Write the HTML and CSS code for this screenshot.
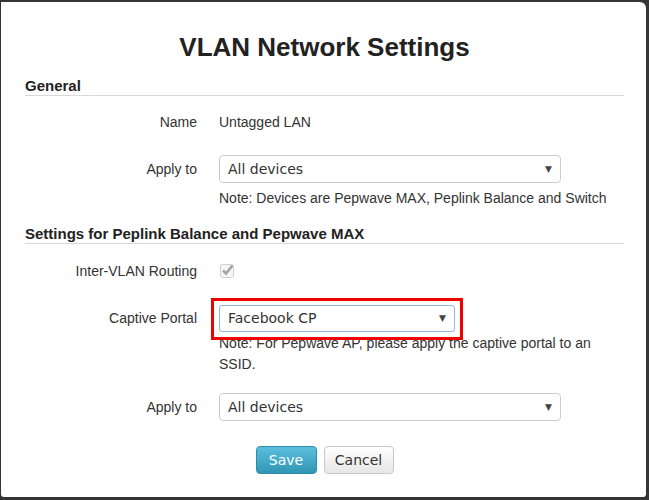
FILE: index.html
```html
<!DOCTYPE html>
<html lang="en">
  <head>
    <meta charset="UTF-8" />
    <meta name="viewport" content="width=device-width, initial-scale=1.0" />
    <title>VLAN Network Settings</title>

    <link rel="stylesheet" href="styles.css">
  </head>
  <body>
    <div class="modal">
      <h1 class="title">VLAN Network Settings</h1>

      <!-- General -->
      <div class="section-head">General</div>

      <div class="row row-name">
        <div class="label">Name</div>
        <div class="value">Untagged LAN</div>
      </div>

      <div class="row row-apply">
        <div class="label">Apply to</div>
        <div class="value">
          <div class="select select-wide">
            <span>All devices</span>
            <span class="arrow">&#9660;</span>
          </div>
        </div>
      </div>
      <div class="row-note">
        <div class="label"></div>
        <div class="value note">Note: Devices are Pepwave MAX, Peplink Balance and Switch</div>
      </div>

      <!-- Balance / MAX -->
      <div class="section-head section-second">Settings for Peplink Balance and Pepwave MAX</div>

      <div class="row row-routing">
        <div class="label">Inter-VLAN Routing</div>
        <div class="value">
          <svg class="checkbox" width="15" height="15" viewBox="0 0 15 15">
            <rect x="0.5" y="1.5" width="13" height="13" rx="2" fill="#f6f6f6" stroke="#cfcfcf" />
            <path d="M3 7.5 L6 10.5 L12.5 2.5" fill="none" stroke="#a3a3a3" stroke-width="2.6" />
          </svg>
        </div>
      </div>

      <div class="row row-portal">
        <div class="label">Captive Portal</div>
        <div class="value">
          <div class="highlight-wrap">
            <div class="select select-portal">
              <span>Facebook CP</span>
              <span class="arrow">&#9660;</span>
            </div>
            <div class="highlight"></div>
          </div>
        </div>
      </div>
      <div class="row-note row-note-portal">
        <div class="label"></div>
        <div class="value note note-tall">Note: For Pepwave AP, please apply the captive portal to an SSID.</div>
      </div>

      <div class="row row-apply2">
        <div class="label">Apply to</div>
        <div class="value">
          <div class="select select-wide">
            <span>All devices</span>
            <span class="arrow">&#9660;</span>
          </div>
        </div>
      </div>

      <!-- Actions -->
      <div class="actions">
        <button class="btn btn-save">Save</button>
        <button class="btn btn-cancel">Cancel</button>
      </div>
    </div>
  </body>
</html>
```

FILE: styles.css
```css
/* Page behind the dialog */
body {
  margin: 0;
  background: #353535;
  font-family: "Liberation Sans", Arial, sans-serif;
  color: #333;
  font-size: 14px;
}

/* The dialog box */
.modal {
  box-sizing: border-box;
  width: 645px;
  height: 495px;
  margin: 2px 0 0 1px;
  padding: 30px 22px 0 24px;
  background: #fff;
  border-radius: 0 6px 3px 3px;
}

.title {
  margin: 0;
  font-size: 26px;
  line-height: 30px;
  font-weight: bold;
  text-align: center;
  color: #222;
}

/* Section headings with the grey rule */
.section-head {
  margin-top: 15px;
  font-size: 15px;
  line-height: 18px;
  font-weight: bold;
  color: #222;
  border-bottom: 1px solid #d8d8d8;
}

.section-second {
  margin-top: 17px;
}

/* Form rows */
.row,
.row-note {
  display: flex;
  gap: 22px;
}

.row {
  height: 28px;
  align-items: center;
}

.label {
  width: 172px;
  flex: none;
  text-align: right;
}

.value {
  flex: 1;
}

.row-name {
  margin-top: 12px;
}

.row-apply {
  margin-top: 19px;
}

.row-note {
  margin-top: 5px;
  line-height: 20px;
}

.row-routing {
  margin-top: 13px;
}

.row-portal {
  margin-top: 19px;
}

.row-note-portal {
  margin-top: 1px;
}

.note-tall {
  line-height: 21px;
}

.row-apply2 {
  margin-top: 18px;
}

/* Drop-down look */
.select {
  box-sizing: border-box;
  height: 28px;
  display: flex;
  align-items: center;
  justify-content: space-between;
  padding: 0 8px 0 8px;
  background: #fff;
  border: 1px solid #cccccc;
  border-radius: 4px;
  font-family: "DejaVu Sans", Verdana, sans-serif;
  font-size: 14px;
  color: #333;
}

.select-wide {
  width: 342px;
}

.select-portal {
  width: 236px;
  height: 27px;
  border-color: #8fb8e6;
  border-radius: 3px;
}

.arrow {
  font-size: 9px;
  color: #444;
}

.checkbox {
  display: block;
  margin-left: 1px;
  margin-top: -2px;
}

/* Red annotation frame over the captive portal field */
.highlight-wrap {
  position: relative;
  width: 236px;
}

.highlight {
  position: absolute;
  left: -8px;
  top: -7px;
  right: -8px;
  bottom: -8px;
  border: 3px solid #f00000;
}

/* Buttons */
.actions {
  display: flex;
  justify-content: center;
  gap: 7px;
  margin-top: 25px;
}

.btn {
  box-sizing: border-box;
  height: 28px;
  padding: 0;
  border-radius: 4px;
  font-family: "DejaVu Sans", Verdana, sans-serif;
  font-size: 14px;
}

.btn-save {
  width: 61px;
  color: #fff;
  background: linear-gradient(#5bc0de, #2f96b4);
  border: 1px solid #2d8cab;
}

.btn-cancel {
  width: 70px;
  color: #333;
  background: linear-gradient(#ffffff, #e6e6e6);
  border: 1px solid #c8c8c8;
}
```
